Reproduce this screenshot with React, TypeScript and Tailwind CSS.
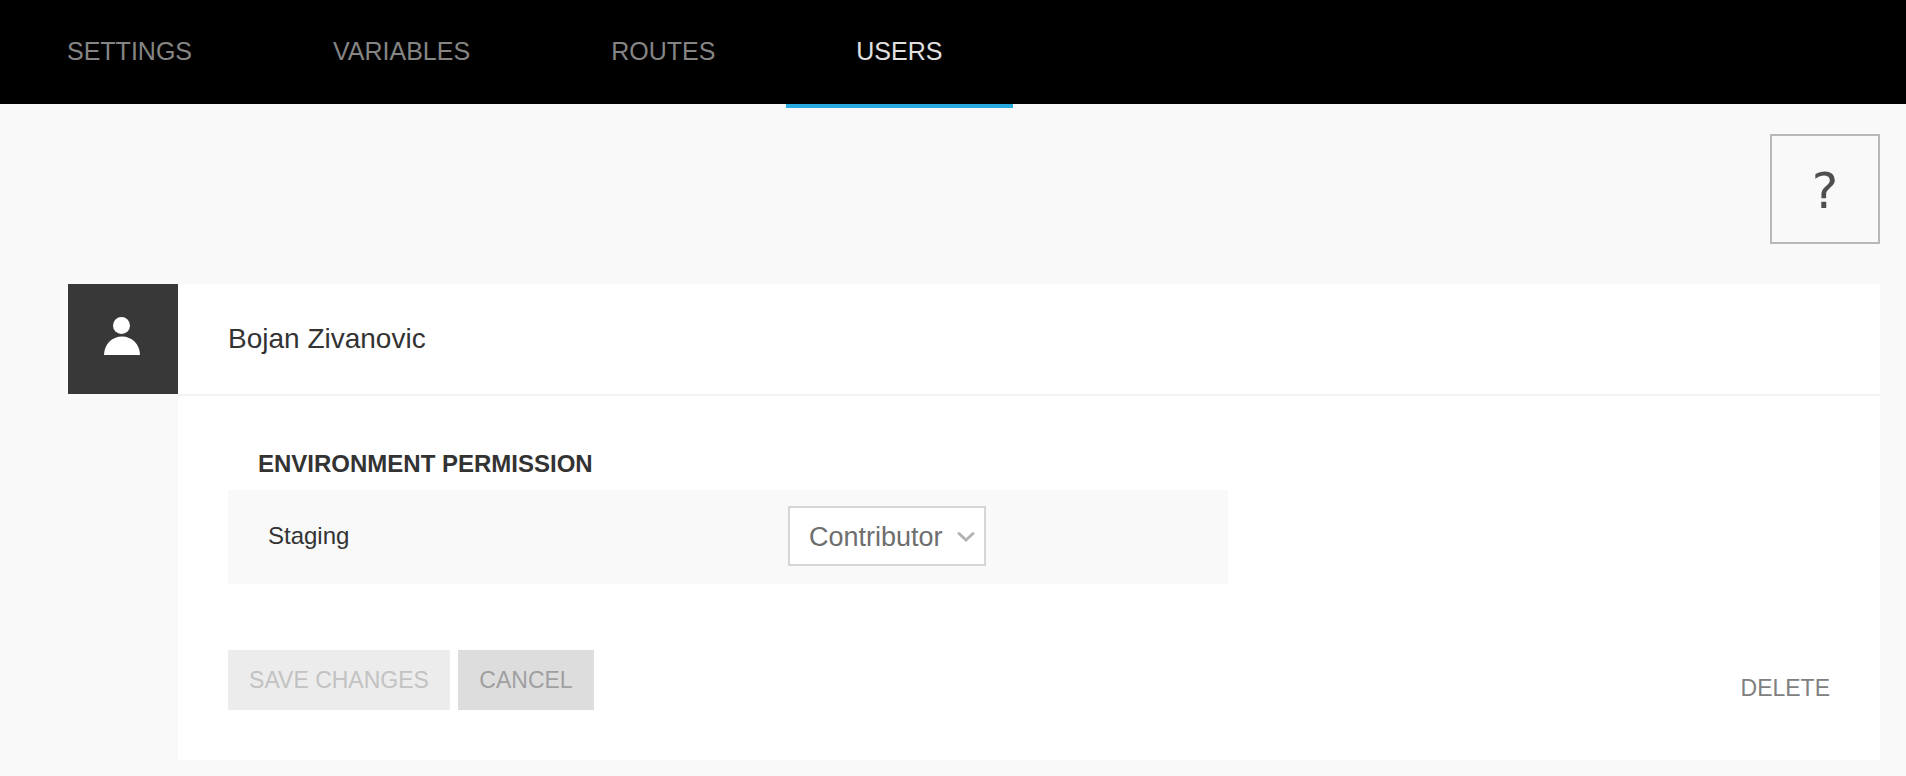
import { useState } from "react";
import clsx from "clsx";

const tabs = ["Settings", "Variables", "Routes", "Users"];

function UserIcon() {
  return (
    <svg viewBox="0 0 36 38" className="h-[38px] w-9 fill-white" aria-hidden="true">
      <circle cx="17.5" cy="8.5" r="8.5" />
      <path d="M0 38C0 27.500 8 19.500 18 19.500S36 27.500 36 38Z" />
    </svg>
  );
}

function Navigation() {
  return (
    <nav className="flex h-[104px] bg-black pr-4">
      {tabs.map((tab, index) => {
        const active = tab === "Users";
        return (
          <a
            key={tab}
            href={`#${tab.toLowerCase()}`}
            aria-current={active ? "page" : undefined}
            className={clsx(
              "relative flex items-center pr-[71px] pb-0.5 text-[25px] leading-8 uppercase",
              index === 0 ? "pl-[67px]" : "pl-[70px]",
              active ? "text-[#e0e0e0]" : "text-[#858585]",
            )}
          >
            {tab}
            {active && <span className="absolute inset-x-0 top-full h-1 bg-[#29abe2]" />}
          </a>
        );
      })}
    </nav>
  );
}

function PermissionRow() {
  const [role, setRole] = useState("Contributor");
  return (
    <div className="flex h-[94px] max-w-[1000px] items-center bg-[#f9f9f9] pb-0.5 pl-10">
      <label htmlFor="staging-role" className="w-[520px] text-2xl text-[#333]">
        Staging
      </label>
      <div className="relative">
        <select
          id="staging-role"
          value={role}
          onChange={(event) => setRole(event.target.value)}
          className="h-[60px] w-[198px] appearance-none border-2 border-[#d6d6d6] bg-white pt-0.5 pr-10 pl-[19px] text-[27px] text-[#6e6e6e]"
        >
          <option>Contributor</option>
          <option>Viewer</option>
          <option>Admin</option>
        </select>
        <svg
          viewBox="0 0 18 12"
          className="pointer-events-none absolute top-[25px] right-[11px] h-3 w-[18px] fill-none stroke-[#b3b3b3] stroke-3"
          aria-hidden="true"
        >
          <path d="M2 2.500L9 9L16 2.500" strokeLinecap="round" />
        </svg>
      </div>
    </div>
  );
}

export default function App() {
  return (
    <div className="min-h-screen bg-[#f9f9f9] font-['Liberation_Sans',Arial,sans-serif] text-[#333]">
      <Navigation />
      <main className="pt-[30px] pr-[26px] pb-4 pl-[68px]">
        <div className="flex justify-end">
          <button
            type="button"
            aria-label="Help"
            className="size-[110px] border-2 border-[#b8b8b8] pt-1 font-['DejaVu_Sans',sans-serif] text-[50px] text-[#4f4f4f]"
          >
            ?
          </button>
        </div>

        <section className="mt-10 flex items-start">
          <div className="flex size-[110px] shrink-0 items-center justify-center bg-[#383838] pr-0.5 pb-1.5">
            <UserIcon />
          </div>
          <div className="flex-1 bg-white">
            <header className="flex h-28 items-center border-b-2 border-[#f3f3f3] px-[50px]">
              <h1 className="text-[28px] leading-8">Bojan Zivanovic</h1>
            </header>
            <form className="px-[50px] pt-[52px] pb-[50px]" onSubmit={(event) => event.preventDefault()}>
              <h2 className="pb-2.5 pl-[30px] text-2xl font-bold">ENVIRONMENT PERMISSION</h2>
              <PermissionRow />
              <div className="mt-[66px] flex items-center gap-2 text-[23px]">
                <button
                  type="submit"
                  disabled
                  className="h-[60px] w-[222px] bg-[#ececec] whitespace-nowrap text-[#c2c2c2]"
                >
                  SAVE CHANGES
                </button>
                <button type="button" className="h-[60px] w-[136px] bg-[#ddd] text-[#a0a0a0]">
                  CANCEL
                </button>
                <button type="button" className="ml-auto pt-4 text-[#808080]">
                  DELETE
                </button>
              </div>
            </form>
          </div>
        </section>
      </main>
    </div>
  );
}
